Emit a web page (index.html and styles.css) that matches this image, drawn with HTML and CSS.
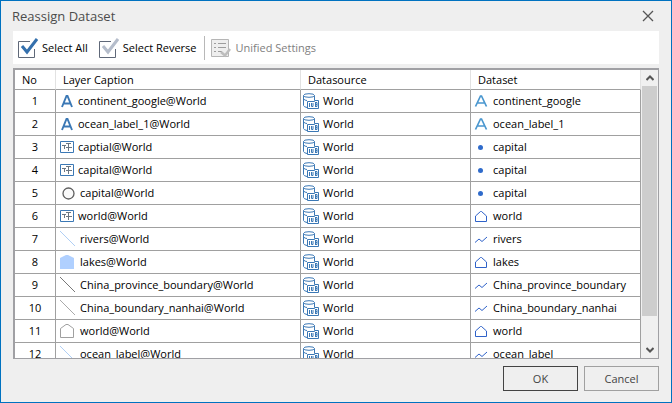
FILE: index.html
```html
<!DOCTYPE html>
<html lang="en">
<head>
<meta charset="utf-8">
<title>Reassign Dataset</title>
<link rel="stylesheet" href="styles.css">
</head>
<body>
<svg class="sprite" aria-hidden="true">
  <symbol id="text-layer" viewBox="0 0 14 16"><path d="M2 14 6.500 3h1L12 14M3.500 10.500h7" fill="none" stroke="#3b78b5" stroke-width="1.900"/></symbol>
  <symbol id="label-layer" viewBox="0 0 14 16"><path d="M.5 2.500h13v11H.5z" fill="#fff" stroke="#3b78b5"/><path d="M2 6.500h4M4.500 6.500V10M6 4.500h5M8.500 4.500V8M6 8.500h6M8.500 8.500V12" fill="none" stroke="#6b7682"/></symbol>
  <symbol id="point-layer" viewBox="0 0 16 16"><circle cx="8.500" cy="8.500" r="5.500" fill="#fafafa" stroke="#5f5f5f" stroke-width="1.300"/></symbol>
  <symbol id="line-layer" viewBox="0 0 16 16"><path d="M0 0 15 15" fill="none" stroke="currentColor" shape-rendering="crispEdges"/></symbol>
  <symbol id="area-fill" viewBox="0 0 16 16"><path d="M0 4 6 1h2l6 3v11H0z" fill="#b0d0ff"/></symbol>
  <symbol id="area-layer" viewBox="0 0 16 16"><path d="M.5 14.500v-9L6 1.500h2l5.500 4v9z" fill="#fff" stroke="#a0a0a0"/></symbol>
  <symbol id="source" viewBox="0 0 16 16"><path d="M.5 2.500v10Q1 14 4 14.500M11.500 2.500V7" fill="none" stroke="#3b78b5"/><ellipse cx="6" cy="2.500" rx="5.500" ry="1.800" fill="#fff" stroke="#3b78b5"/><path d="M.5 6Q2 7.500 4 7.500" fill="none" stroke="#3b78b5"/><path d="M4.500 8.500h7v-1h4v8h-11z" fill="#fff" stroke="#3b78b5"/><path d="M6.500 10v4M8.500 10v3.500h1.500V10M12.500 9v5M12.500 9.500h1.500v4h-1.500M12.500 11.500h1.500" fill="none" stroke="#3b78b5"/></symbol>
  <symbol id="text-data" viewBox="0 0 16 16"><path d="M2.500 13.500 7.500 3h1l5 10.500M4.500 10h7" fill="none" stroke="#4a97cf" stroke-width="1.700"/></symbol>
  <symbol id="point-data" viewBox="0 0 16 16"><circle cx="7.500" cy="8.500" r="2.500" fill="#2f6bcb"/></symbol>
  <symbol id="area-data" viewBox="0 0 16 16"><path d="M2.500 13.500V8l5-4.500h1L13.500 8v5.500z" fill="#fff" stroke="#2f62c9"/></symbol>
  <symbol id="line-data" viewBox="0 0 16 16"><path d="M2 11.500 6 8l3 2.500L14 6" fill="none" stroke="#2f62c9"/></symbol>
</svg>
<main class="dialog">
  <header class="titlebar">
    <h1 class="title">Reassign Dataset</h1>
    <button class="close" type="button" aria-label="Close"><svg width="12" height="12" viewBox="0 0 12 12"><path d="m1 1 10 10M11 1 1 11" stroke="#555" stroke-width="1.300"/></svg></button>
  </header>
  <div class="toolbar">
    <button class="tool" type="button"><svg width="20" height="22" viewBox="0 0 20 22"><path d="M12 4.500H.5v16h16V12" fill="none" stroke="#5f6878"/><path d="m4 9 5 6L19 2" fill="none" stroke="#3470ad" stroke-width="3"/></svg>Select All</button>
    <button class="tool" type="button"><svg width="20" height="22" viewBox="0 0 20 22"><path d="M12 4.500H.5v16h16V12" fill="none" stroke="#5f6878"/><path d="m4 9 5 6L19 2" fill="none" stroke="#b5bdcb" stroke-width="3"/></svg>Select Reverse</button>
    <span class="divider"></span>
    <button class="tool" type="button" disabled><svg width="20" height="22" viewBox="0 0 20 22"><path d="M.5 2.500h17v17H.5z" fill="#eee" stroke="#b5b5b5"/><path d="M3 6.500h2M3 10.500h2M3 14.500h2M7 6.500h8M7 10.500h8M7 14.500h4" stroke="#9d9d9d"/><path d="m10 15 4 3.500 5-6.500" fill="none" stroke="#bdbdbd" stroke-width="2.500"/></svg>Unified Settings</button>
  </div>
  <section class="listing">
    <div class="viewport">
      <table class="layers">
        <colgroup><col class="col-no"><col class="col-layer"><col class="col-source"><col class="col-data"></colgroup>
        <thead><tr><th>No</th><th>Layer Caption</th><th>Datasource</th><th>Dataset</th></tr></thead>
        <tbody>
          <tr><td>1</td><td><div class="cell layer"><svg class="small"><use href="#text-layer"/></svg>continent_google@World</div></td><td><div class="cell"><svg><use href="#source"/></svg>World</div></td><td><div class="cell"><svg><use href="#text-data"/></svg>continent_google</div></td></tr>
          <tr><td>2</td><td><div class="cell layer"><svg class="small"><use href="#text-layer"/></svg>ocean_label_1@World</div></td><td><div class="cell"><svg><use href="#source"/></svg>World</div></td><td><div class="cell"><svg><use href="#text-data"/></svg>ocean_label_1</div></td></tr>
          <tr><td>3</td><td><div class="cell layer"><svg class="small"><use href="#label-layer"/></svg>captial@World</div></td><td><div class="cell"><svg><use href="#source"/></svg>World</div></td><td><div class="cell"><svg><use href="#point-data"/></svg>capital</div></td></tr>
          <tr><td>4</td><td><div class="cell layer"><svg class="small"><use href="#label-layer"/></svg>capital@World</div></td><td><div class="cell"><svg><use href="#source"/></svg>World</div></td><td><div class="cell"><svg><use href="#point-data"/></svg>capital</div></td></tr>
          <tr><td>5</td><td><div class="cell layer"><svg><use href="#point-layer"/></svg>capital@World</div></td><td><div class="cell"><svg><use href="#source"/></svg>World</div></td><td><div class="cell"><svg><use href="#point-data"/></svg>capital</div></td></tr>
          <tr><td>6</td><td><div class="cell layer"><svg class="small"><use href="#label-layer"/></svg>world@World</div></td><td><div class="cell"><svg><use href="#source"/></svg>World</div></td><td><div class="cell"><svg><use href="#area-data"/></svg>world</div></td></tr>
          <tr><td>7</td><td><div class="cell layer"><svg class="pale"><use href="#line-layer"/></svg>rivers@World</div></td><td><div class="cell"><svg><use href="#source"/></svg>World</div></td><td><div class="cell"><svg><use href="#line-data"/></svg>rivers</div></td></tr>
          <tr><td>8</td><td><div class="cell layer"><svg><use href="#area-fill"/></svg>lakes@World</div></td><td><div class="cell"><svg><use href="#source"/></svg>World</div></td><td><div class="cell"><svg><use href="#area-data"/></svg>lakes</div></td></tr>
          <tr><td>9</td><td><div class="cell layer"><svg class="dark"><use href="#line-layer"/></svg>China_province_boundary@World</div></td><td><div class="cell"><svg><use href="#source"/></svg>World</div></td><td><div class="cell"><svg><use href="#line-data"/></svg>China_province_boundary</div></td></tr>
          <tr><td>10</td><td><div class="cell layer"><svg class="grey"><use href="#line-layer"/></svg>China_boundary_nanhai@World</div></td><td><div class="cell"><svg><use href="#source"/></svg>World</div></td><td><div class="cell"><svg><use href="#line-data"/></svg>China_boundary_nanhai</div></td></tr>
          <tr><td>11</td><td><div class="cell layer"><svg><use href="#area-layer"/></svg>world@World</div></td><td><div class="cell"><svg><use href="#source"/></svg>World</div></td><td><div class="cell"><svg><use href="#area-data"/></svg>world</div></td></tr>
          <tr><td>12</td><td><div class="cell layer"><svg class="pale"><use href="#line-layer"/></svg>ocean_label@World</div></td><td><div class="cell"><svg><use href="#source"/></svg>World</div></td><td><div class="cell"><svg><use href="#line-data"/></svg>ocean_label</div></td></tr>
        </tbody>
      </table>
    </div>
    <div class="scrollbar">
      <button class="arrow" type="button" aria-label="Scroll up"><svg width="8" height="6" viewBox="0 0 8 6"><path d="m.5 5 3.500-3.500L7.500 5" fill="none" stroke="#555" stroke-width="2"/></svg></button>
      <div class="track"><div class="thumb"></div></div>
      <button class="arrow" type="button" aria-label="Scroll down"><svg width="8" height="6" viewBox="0 0 8 6"><path d="m.5 1 3.500 3.500L7.500 1" fill="none" stroke="#555" stroke-width="2"/></svg></button>
    </div>
  </section>
  <footer class="actions">
    <button class="action primary" type="button">OK</button>
    <button class="action" type="button">Cancel</button>
  </footer>
</main>
</body>
</html>
```

FILE: styles.css
```css
* { box-sizing: border-box; }

body {
  margin: 0;
  font: 11px/16px "Open Sans", "Noto Sans", sans-serif;
  color: #000;
}

button {
  padding: 0;
  border: 0;
  background: none;
  font: inherit;
  color: inherit;
}

svg { flex: none; display: block; }

.sprite { position: absolute; width: 0; height: 0; }

.dialog {
  display: flex;
  flex-direction: column;
  height: 100vh;
  padding: 0 12px 11px 11px;
  border: 1px solid #0072c0;
  background: #efefef;
}

.titlebar {
  display: flex;
  align-items: center;
  justify-content: space-between;
  height: 30px;
  flex: none;
}

.title {
  margin: 0;
  font-size: 13px;
  font-weight: 400;
  color: #4c4c4c;
}

.close { display: flex; padding: 4px 5px; }

.toolbar {
  display: flex;
  align-items: center;
  gap: 11px;
  height: 33px;
  flex: none;
  margin-left: 1px;
  padding: 0 5px;
  background: #fff;
}

.tool { display: flex; align-items: center; gap: 4px; }
.tool:disabled { color: #808080; }

.divider {
  width: 1px;
  height: 24px;
  margin: 0 -5px 0 -3px;
  background: #b8b8b8;
}

.listing {
  display: flex;
  flex: 1;
  min-height: 0;
  margin: 4px 0 0 1px;
  border: 1px solid #a0a0a4;
  border-width: 2px 1px 1px 2px;
  background: #fff;
}

.viewport { flex: 1; overflow: hidden; }

.layers {
  width: 100%;
  table-layout: fixed;
  border-collapse: separate;
  border-spacing: 0;
}

.col-no { width: 41px; }
.col-layer { width: 245px; }
.col-source { width: 170px; }

th, td {
  padding: 0;
  border: 0 solid #a0a0a0;
  border-width: 0 1px 1px 0;
}

th {
  height: 20px;
  padding-left: 7px;
  border-right-color: #e2e2e2;
  text-align: left;
  font-weight: 400;
}

td { height: 23px; }
td:first-child { text-align: center; }

.cell {
  display: flex;
  align-items: center;
  gap: 4px;
  padding-left: 2px;
  white-space: nowrap;
}

.cell svg { width: 16px; height: 16px; }
.cell .small { width: 14px; }
.layer { padding-left: 4px; }
.pale { color: #b0cff5; }
.dark { color: #777; }
.grey { color: #aaa; }

.scrollbar {
  display: flex;
  flex-direction: column;
  width: 17px;
  background: #f0f0f0;
}

.arrow {
  display: flex;
  align-items: center;
  justify-content: center;
  height: 16px;
}

.track { flex: 1; }

.thumb {
  height: 90%;
  margin: 0 1px;
  background: #cdcdcd;
}

.actions {
  display: flex;
  justify-content: flex-end;
  gap: 6px;
  flex: none;
  margin-top: 7px;
}

.action {
  width: 75px;
  height: 25px;
  border: 1px solid #a0a0a0;
  color: #444;
}

.primary { border-color: #444; }
```
